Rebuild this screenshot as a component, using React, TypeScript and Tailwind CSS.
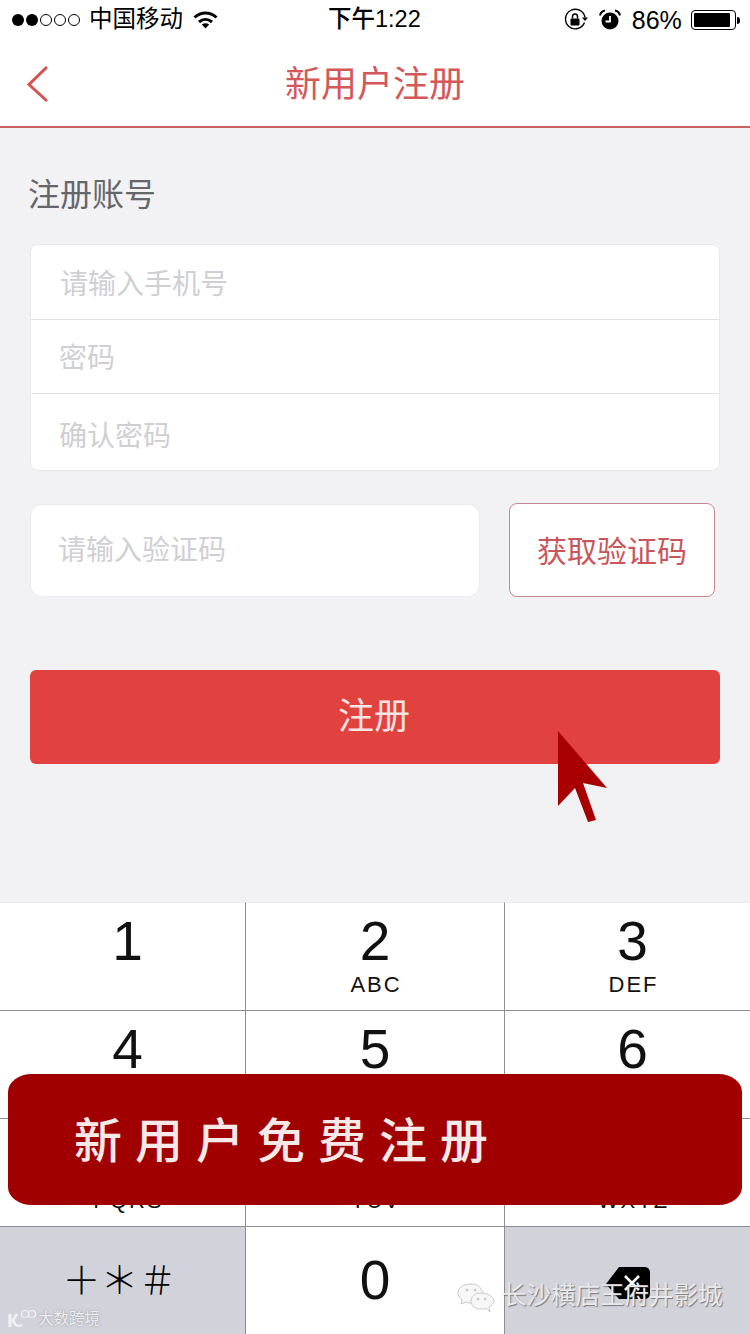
import React from "react";

const keys = [
  { digit: "1", letters: "" },
  { digit: "2", letters: "ABC" },
  { digit: "3", letters: "DEF" },
  { digit: "4", letters: "GHI" },
  { digit: "5", letters: "JKL" },
  { digit: "6", letters: "MNO" },
  { digit: "7", letters: "PQRS" },
  { digit: "8", letters: "TUV" },
  { digit: "9", letters: "WXYZ" },
];

const cjk = "font-['Liberation_Sans','Noto_Sans_CJK_SC',sans-serif]";

function StatusBar() {
  return (
    <div className="h-10 bg-white flex items-center text-black relative">
      <div className="flex items-center gap-[2px] ml-3">
        <span className="w-3 h-3 rounded-full bg-black" />
        <span className="w-3 h-3 rounded-full bg-black" />
        <span className="w-3 h-3 rounded-full border border-black" />
        <span className="w-3 h-3 rounded-full border border-black" />
        <span className="w-3 h-3 rounded-full border border-black" />
      </div>
      <span className="ml-[9px] text-[23.5px] leading-none">中国移动</span>
      <svg className="ml-[10px]" width="25" height="18" viewBox="0 0 25 18" fill="none">
        <path d="M1.5 6.5C8 0.5 17 0.5 23.5 6.5" stroke="#000" strokeWidth="3" />
        <path d="M6 11C10 7.5 15 7.5 19 11" stroke="#000" strokeWidth="3" />
        <path d="M12.5 17.5L8.8 13.4C11 11.7 14 11.7 16.2 13.4Z" fill="#000" />
      </svg>
      <span className="ml-[110px] text-[23.5px] leading-none font-medium">下午1:22</span>
      <svg className="ml-[143px]" width="24" height="24" viewBox="0 0 24 24" fill="none">
        <path d="M20.5 14.5A9.8 9.8 0 1 1 21 9.5" stroke="#000" strokeWidth="1.4" />
        <path d="M18 9.5H24L21 13Z" fill="#000" />
        <rect x="6.5" y="10.5" width="9" height="7" rx="1" fill="#000" />
        <path d="M8.5 10.5V8.5A2.5 2.5 0 0 1 13.5 8.5V10.5" stroke="#000" strokeWidth="1.5" />
      </svg>
      <svg className="ml-[11px]" width="22" height="22" viewBox="0 0 22 22" fill="none">
        <circle cx="11" cy="12" r="8.5" fill="#000" />
        <path d="M11 7V12.5H6.5" stroke="#fff" strokeWidth="1.8" />
        <path d="M1 6.5C1.5 3.5 3.5 2 6 1.5" stroke="#000" strokeWidth="2" />
        <path d="M21 6.5C20.5 3.5 18.5 2 16 1.5" stroke="#000" strokeWidth="2" />
      </svg>
      <span className="ml-[11px] text-[25px] leading-none">86%</span>
      <div className="ml-[9px] w-[45px] h-[20px] rounded-[4px] border border-black p-[2px]">
        <div className="h-full w-[36px] rounded-[1px] bg-black" />
      </div>
      <span className="ml-[1px] w-[3px] h-[7px] bg-black rounded-r-sm" />
    </div>
  );
}

function Field({ label, indent }: { label: string; indent: string }) {
  return <div className={`h-full flex items-center text-[28px] leading-none text-[#cfcfd4] ${indent}`}>{label}</div>;
}

export default function App() {
  return (
    <div className={`relative w-[750px] h-[1334px] overflow-hidden bg-[#f2f2f4] flex flex-col ${cjk}`}>
      <StatusBar />

      <div className="h-[88px] bg-white border-b-2 border-[#c9605f] flex items-center justify-center relative">
        <svg className="absolute left-[24px] top-[24px]" width="28" height="40" viewBox="0 0 28 40" fill="none">
          <path d="M23 3L5 20.5L23 37" stroke="#d4534f" strokeWidth="3" />
        </svg>
        <span className="text-[36px] leading-none text-[#d4575a] mt-[3px]">新用户注册</span>
      </div>

      <div className="flex-1 px-[30px]">
        <div className="pt-[51px] h-[116px] text-[32px] leading-[32px] text-[#66666a] -ml-[2px]">注册账号</div>

        <div className="h-[227px] bg-white rounded-lg border border-[#e9e9ec] grid grid-rows-[75px_74px_1fr] divide-y divide-[#e2e2e5]">
          <Field label="请输入手机号" indent="pl-[29px] pt-[6px]" />
          <Field label="密码" indent="pl-[28px] pt-[4px]" />
          <Field label="确认密码" indent="pl-[28px] pt-[9px]" />
        </div>

        <div className="mt-[33px] flex items-stretch gap-[29px] h-[93px]">
          <div className="w-[450px] bg-white rounded-xl border border-[#ececef] flex items-center pl-[27px] pt-[1px] text-[28px] leading-none text-[#cfcfd4]">
            请输入验证码
          </div>
          <div className="w-[206px] -mt-[1px] bg-white rounded-lg border border-[#c58a8f] flex items-center justify-center pt-[3px] text-[30px] leading-none text-[#c9565a]">
            获取验证码
          </div>
        </div>

        <div className="mt-[73px] h-[94px] rounded-md bg-[#e2423f] flex items-center justify-center pr-[2px] pb-[1px] text-[36px] leading-none text-[#f5e4e2]">
          注册
        </div>
      </div>

      <div className="h-[432px] grid grid-cols-[246px_259px_245px] grid-rows-[108px_108px_108px_108px] bg-white">
        {keys.map((key) => (
          <div
            key={key.digit}
            className="border-t border-r border-t-[#8e8e92] border-r-[#8e8e92] [&:nth-child(-n+3)]:border-t-[#ececee] [&:nth-child(3n)]:border-r-0 [&:nth-child(3n)]:pl-[10px] [&:nth-child(3n+1)]:pl-[10px] flex flex-col items-center pt-[8px]"
          >
            <span className="text-[55px] leading-[60px] text-[#111]">{key.digit}</span>
            <span className="mt-[1px] pl-[2px] text-[22px] leading-[26px] tracking-[2px] text-[#111]">{key.letters}</span>
          </div>
        ))}
        <div className="border-t border-r border-[#8e8e92] bg-[#d2d3da] flex items-center justify-center pr-[6px] text-[38px] leading-none text-black font-light">
          ＋＊＃
        </div>
        <div className="border-t border-r border-[#8e8e92] flex justify-center pt-[23px]">
          <span className="text-[55px] leading-[60px] text-[#111]">0</span>
        </div>
        <div className="border-t border-[#8e8e92] bg-[#d2d3da] flex justify-center pt-[40px]">
          <svg width="44" height="32" viewBox="0 0 44 32">
            <path d="M13 0H38Q44 0 44 6V26Q44 32 38 32H13L0 17Z" fill="#000" />
            <path d="M19 9L33 23M33 9L19 23" stroke="#fff" strokeWidth="2.5" />
          </svg>
        </div>
      </div>

      {/* overlays added on top of the screenshot */}
      <svg className="absolute left-[556px] top-[730px]" width="54" height="94" viewBox="0 0 54 94">
        <path d="M2 1L51 58L27 53L40 90L32 92L19 58L2 76Z" fill="#a80000" />
      </svg>

      <div className="absolute left-[8px] top-[1074px] w-[734px] h-[131px] rounded-[24px/18px] bg-[#a00000] flex items-center pl-[66px] pt-[5px] text-[48px] leading-none font-medium tracking-[13px] text-[#f8e9e9]">
        新用户免费注册
      </div>

      <div className="absolute left-[8px] top-[1309px] flex items-center text-[15.5px] leading-none text-[#eeeef1] [text-shadow:0_0_2px_rgba(110,110,110,0.7)]">
        <svg width="30" height="20" viewBox="0 0 30 20" fill="none">
          <path d="M2 5V18" stroke="#f2f2f4" strokeWidth="3" />
          <path d="M9 5L5 11C6 16 10 18 14 16" stroke="#f2f2f4" strokeWidth="2.5" />
          <circle cx="17" cy="5" r="3.5" stroke="#f2f2f4" strokeWidth="1.2" />
          <circle cx="24" cy="5" r="3.5" stroke="#f2f2f4" strokeWidth="1.2" />
        </svg>
        大数跨境
      </div>

      <div className="absolute left-[457px] top-[1282px] flex items-center text-[24.5px] leading-none text-[#e9e9ec] [text-shadow:1px_1px_1px_rgba(70,70,70,0.65)]">
        <svg width="38" height="31" viewBox="0 0 38 31" fill="#f7f7f8" stroke="#c9c9cc" strokeWidth="1">
          <path d="M14 2C6 2 1 6 1 11C1 14 3 16 5 18L4 22L9 20C11 21 13 21 15 21C24 21 28 15 25 9C23 4 19 2 14 2Z" />
          <path d="M24 11C17 11 14 15 14 19C14 24 18 27 24 27C26 27 27 27 29 26L33 30L32 25C35 23 37 21 37 19C37 15 31 11 24 11Z" />
          <circle cx="10" cy="8" r="1" fill="#c9c9cc" />
          <circle cx="18" cy="8" r="1" fill="#c9c9cc" />
          <circle cx="21" cy="17" r="1" fill="#c9c9cc" />
          <circle cx="28" cy="17" r="1" fill="#c9c9cc" />
        </svg>
        <span className="ml-[7px] -mt-[2px]">长沙横店王府井影城</span>
      </div>
    </div>
  );
}
